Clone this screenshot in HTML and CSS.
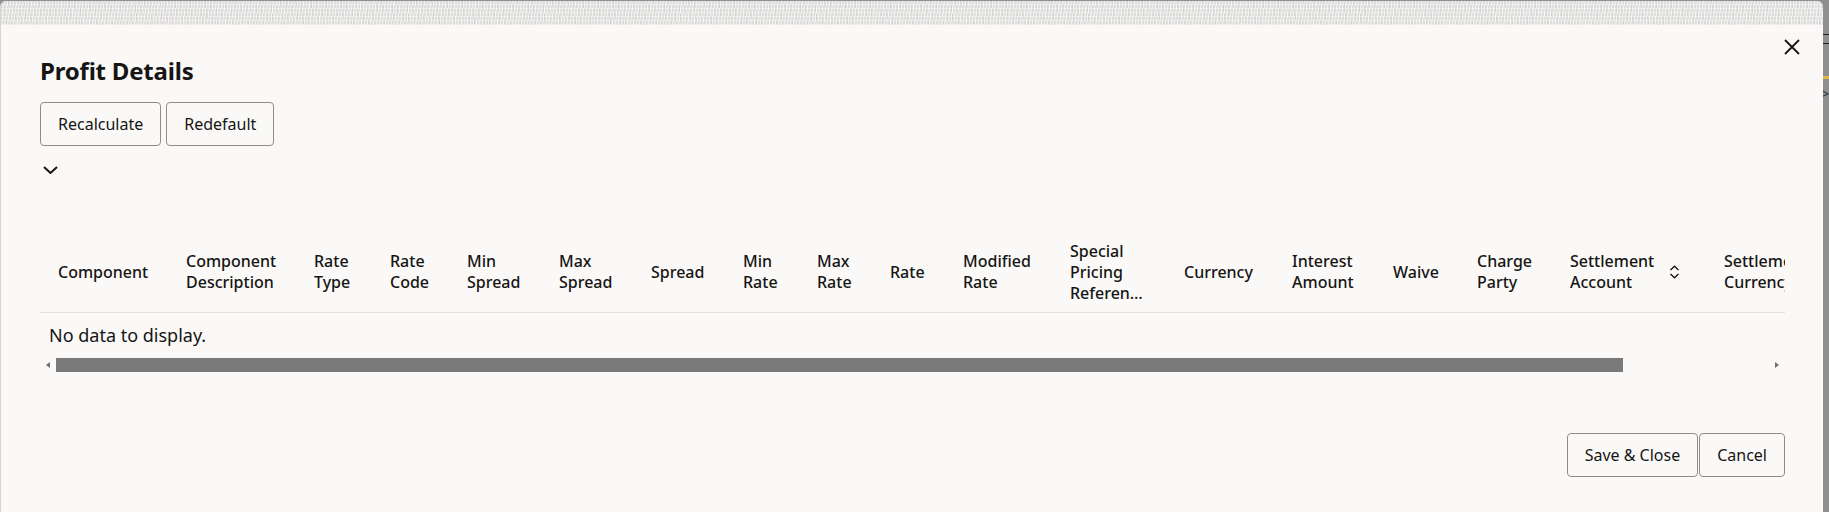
FILE: index.html
```html
<!DOCTYPE html>
<html lang="en">
<head>
<meta charset="utf-8">
<title>Profit Details</title>
<link rel="stylesheet" href="styles.css">
</head>
<body>
<div class="backdrop-marks">
  <span class="mark mark-dark"></span>
  <span class="mark mark-yellow"></span>
  <span class="mark mark-chev">&gt;</span>
</div>
<div class="dialog">
  <div class="texture"></div>
  <button class="close" aria-label="Close">
    <svg width="16" height="16" viewBox="0 0 16 16"><path d="M1 1 L15 15 M15 1 L1 15" stroke="#161513" stroke-width="1.8" fill="none"/></svg>
  </button>
  <div class="content">
    <h1 class="title">Profit Details</h1>
    <div class="toolbar">
      <button class="btn">Recalculate</button>
      <button class="btn">Redefault</button>
    </div>
    <div class="expander">
      <svg width="15" height="8" viewBox="0 0 15 8"><path d="M1 1 L7.5 7 L14 1" stroke="#161513" stroke-width="2" fill="none"/></svg>
    </div>
    <div class="table">
      <div class="thead">
        <div class="hrow">
          <div class="th">Component</div>
          <div class="th">Component<br>Description</div>
          <div class="th">Rate<br>Type</div>
          <div class="th">Rate<br>Code</div>
          <div class="th">Min<br>Spread</div>
          <div class="th">Max<br>Spread</div>
          <div class="th">Spread</div>
          <div class="th">Min<br>Rate</div>
          <div class="th">Max<br>Rate</div>
          <div class="th">Rate</div>
          <div class="th">Modified<br>Rate</div>
          <div class="th">Special<br>Pricing<br>Referen…</div>
          <div class="th">Currency</div>
          <div class="th">Interest<br>Amount</div>
          <div class="th">Waive</div>
          <div class="th">Charge<br>Party</div>
          <div class="th th-sort"><span>Settlement<br>Account</span>
            <svg class="sort" width="11" height="14" viewBox="0 0 11 14"><path d="M1.5 5 L5.5 1.2 L9.5 5 M1.5 9 L5.5 12.8 L9.5 9" stroke="#161513" stroke-width="1.3" fill="none"/></svg>
          </div>
          <div class="th">Settlement<br>Currency</div>
        </div>
      </div>
      <div class="empty">No data to display.</div>
      <div class="hscroll">
        <span class="arrow arrow-left"></span>
        <div class="track"><div class="thumb"></div></div>
        <span class="arrow arrow-right"></span>
      </div>
    </div>
    <div class="footer">
      <button class="btn">Save &amp; Close</button>
      <button class="btn">Cancel</button>
    </div>
  </div>
</div>
</body>
</html>
```

FILE: styles.css
```css
* { box-sizing: border-box; }
html, body { margin: 0; padding: 0; }
body {
  width: 1829px;
  height: 512px;
  overflow: hidden;
  background: #8f8f8f;
  font-family: "Noto Sans", "Open Sans", sans-serif;
  color: #161513;
  position: relative;
}
.backdrop-marks { position: absolute; top: 0; right: 0; width: 6px; height: 512px; }
.mark { position: absolute; right: 0; display: block; }
.mark-dark { top: 34px; width: 6px; height: 10px; border-top: 1px solid #222; border-bottom: 1px solid #222; }
.mark-yellow { top: 76px; width: 6px; height: 3px; background: #e0b84a; }
.mark-chev { top: 86px; font-size: 14px; line-height: 16px; color: #333; }

.dialog {
  position: relative;
  width: 1823px;
  height: 511px;
  margin-top: 1px;
  background: #faf9f8;
  border-left: 1px solid #d7d5d3;
  border-radius: 6px 6px 0 0;
  overflow: hidden;
}
.texture {
  height: 24px;
  background:
    repeating-linear-gradient(97deg, rgba(255,255,255,0.6) 0 1px, transparent 1px 3px),
    repeating-linear-gradient(83deg, rgba(0,0,0,0.05) 0 1px, transparent 1px 5px),
    repeating-linear-gradient(0deg, rgba(255,255,255,0.4) 0 1px, transparent 1px 4px),
    #e0dedc;
}
.close {
  position: absolute;
  top: 38px;
  right: 23px;
  width: 16px;
  height: 16px;
  padding: 0;
  border: 0;
  background: none;
}
.close svg { display: block; }
.content {
  padding: 30px 38px 0 39px;
}
.title {
  margin: 0;
  font-size: 24px;
  line-height: 32px;
  font-weight: 700;
  letter-spacing: -0.2px;
}
.toolbar {
  display: flex;
  gap: 5px;
  margin-top: 15px;
}
.btn {
  height: 44px;
  padding: 0 17px;
  border: 1px solid #8f8d8b;
  border-radius: 4px;
  background: transparent;
  font-family: "Noto Sans", "Open Sans", sans-serif;
  font-size: 16px;
  color: #161513;
}
.expander {
  margin-top: 20px;
  padding-left: 3px;
  height: 8px;
}
.expander svg { display: block; }
.table {
  margin-top: 58px;
  width: 1745px;
  overflow: hidden;
}
.thead {
  height: 81px;
  border-bottom: 1px solid #e2e0de;
  overflow: hidden;
}
.hrow {
  display: grid;
  grid-template-columns: 128px 128px 76px 77px 92px 92px 92px 74px 73px 73px 107px 114px 108px 101px 84px 93px 154px 160px;
  width: max-content;
  height: 80px;
  align-items: center;
}
.th {
  padding-left: 18px;
  font-size: 16px;
  line-height: 21px;
  font-weight: 500;
  white-space: nowrap;
}
.th-sort {
  display: flex;
  align-items: center;
  gap: 15px;
}
.sort { display: block; }
.empty {
  height: 44px;
  padding-left: 9px;
  display: flex;
  align-items: center;
  font-size: 18px;
}
.hscroll {
  height: 16px;
  display: flex;
  align-items: center;
}
.arrow {
  width: 16px;
  height: 16px;
  position: relative;
}
.arrow::after {
  content: "";
  position: absolute;
  top: 5px;
  width: 0;
  height: 0;
  border-top: 3px solid transparent;
  border-bottom: 3px solid transparent;
}
.arrow-left::after { left: 6px; border-right: 4px solid #707070; }
.arrow-right::after { left: 6px; border-left: 4px solid #707070; }
.track {
  flex: 1;
  height: 14px;
}
.thumb {
  width: 1567px;
  height: 14px;
  background: #7a7a7a;
}
.footer {
  display: flex;
  justify-content: flex-end;
  gap: 1px;
  margin-top: 60px;
}
```
